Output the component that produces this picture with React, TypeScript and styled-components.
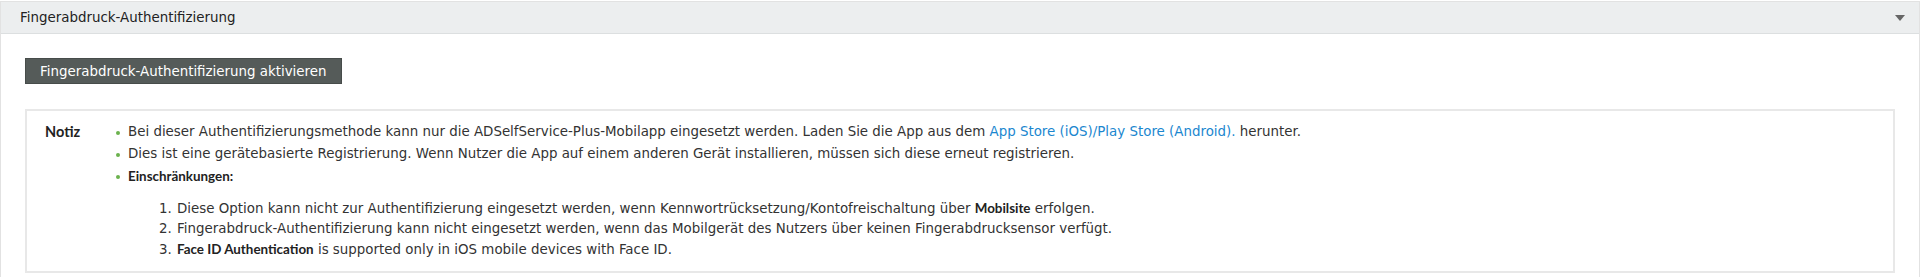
import React from 'react';
import styled, { createGlobalStyle } from 'styled-components';

const GlobalStyle = createGlobalStyle`
  body {
    margin: 0;
    padding-top: 1px;
    background: #fff;
    font-family: 'DejaVu Sans', Verdana, sans-serif;
    font-size: 13.4px;
    color: #333;
  }
`;

const Panel = styled.section`
  border: 1px solid #e2e2e2;
  border-bottom: none;
  min-height: 276px;
  box-sizing: border-box;
`;

const PanelHeader = styled.div`
  display: flex;
  align-items: center;
  height: 31px;
  padding: 0 19px;
  background: #eceeef;
  border-bottom: 1px solid #dcdfe0;
  color: #222;
`;

const HeaderTitle = styled.span`
  flex: 1;
`;

const Caret = styled.span`
  width: 0;
  height: 0;
  margin-right: -5px;
  border-left: 5px solid transparent;
  border-right: 5px solid transparent;
  border-top: 6px solid #666;
`;

const PanelBody = styled.div`
  padding: 24px 24px 0;
`;

const ActionButton = styled.button`
  height: 26px;
  padding: 0 14px;
  border: 1px solid #474c4a;
  background: #555b59;
  color: #fff;
  font-family: inherit;
  font-size: 13.4px;
  cursor: pointer;
`;

const NoteBox = styled.div`
  display: grid;
  grid-template-columns: 70px 1fr;
  margin-top: 25px;
  padding: 10px 18px 11px;
  border: 2px solid #e8e8e8;
`;

const NoteLabel = styled.div`
  font-family: Lato, sans-serif;
  font-weight: 700;
  font-size: 14.5px;
  line-height: 22px;
  color: #222;
`;

const BulletList = styled.ul`
  margin: 0;
  padding: 0;
  list-style: none;
`;

const BulletItem = styled.li`
  position: relative;
  padding-left: 13px;
  line-height: 22px;

  &::before {
    content: '';
    position: absolute;
    left: 1px;
    top: 10px;
    width: 4px;
    height: 4px;
    border-radius: 50%;
    background: #6bb24d;
  }
`;

const NumberList = styled.ol`
  margin: 10px 0 0;
  padding-left: 48px;

  li {
    line-height: 20px;
    padding-left: 1px;
  }
`;

const Strong = styled.b`
  font-family: Lato, sans-serif;
  font-weight: 700;
  font-size: 13.4px;
  color: #222;
`;

const Link = styled.a`
  color: #1b87cf;
  text-decoration: none;
`;

export default function App() {
  return (
    <>
      <GlobalStyle />
      <Panel>
        <PanelHeader>
          <HeaderTitle>Fingerabdruck-Authentifizierung</HeaderTitle>
          <Caret />
        </PanelHeader>
        <PanelBody>
          <ActionButton>Fingerabdruck-Authentifizierung aktivieren</ActionButton>
          <NoteBox>
            <NoteLabel>Notiz</NoteLabel>
            <BulletList>
              <BulletItem>
                Bei dieser Authentifizierungsmethode kann nur die ADSelfService-Plus-Mobilapp eingesetzt werden. Laden Sie die App aus dem{' '}
                <Link href="#">App Store (iOS)/Play Store (Android).</Link> herunter.
              </BulletItem>
              <BulletItem>
                Dies ist eine gerätebasierte Registrierung. Wenn Nutzer die App auf einem anderen Gerät installieren, müssen sich diese erneut registrieren.
              </BulletItem>
              <BulletItem>
                <Strong>Einschränkungen:</Strong>
                <NumberList>
                  <li>
                    Diese Option kann nicht zur Authentifizierung eingesetzt werden, wenn Kennwortrücksetzung/Kontofreischaltung über <Strong>Mobilsite</Strong> erfolgen.
                  </li>
                  <li>
                    Fingerabdruck-Authentifizierung kann nicht eingesetzt werden, wenn das Mobilgerät des Nutzers über keinen Fingerabdrucksensor verfügt.
                  </li>
                  <li>
                    <Strong>Face ID Authentication</Strong> is supported only in iOS mobile devices with Face ID.
                  </li>
                </NumberList>
              </BulletItem>
            </BulletList>
          </NoteBox>
        </PanelBody>
      </Panel>
    </>
  );
}
